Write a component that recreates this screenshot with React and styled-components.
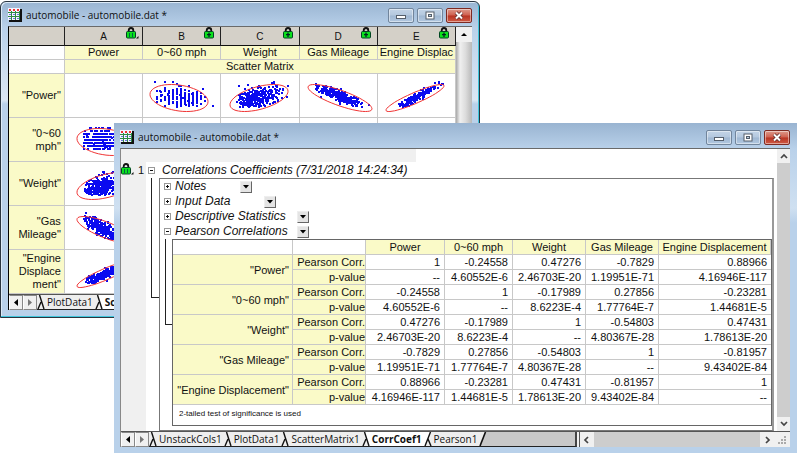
import React from "react";
import styled, { createGlobalStyle, css } from "styled-components";

const GlobalStyle = createGlobalStyle`
  * { box-sizing: border-box; }
  body { margin: 0; background: #fff; color: #111; font: 11px/15px "Liberation Sans", Arial, sans-serif; }
  button { margin: 0; padding: 0; font: inherit; color: inherit; }
`;

const Desktop = styled.main`
  position: relative;
  min-height: 100vh;
  overflow: hidden;
`;

/* ---------- window frame ---------- */

const Frame = styled.section`
  position: absolute;
  display: flex;
  flex-direction: column;
  ${(p) =>
    p.$front
      ? css`
          top: 123px;
          left: 114px;
          right: 3px;
          padding: 0 7px 6px 6px;
          background: linear-gradient(#99b4d1, #b9d1ea 26px, #cfe0f1 85px, #b9d1ea 100px);
        `
      : css`
          top: 1px;
          left: 0;
          width: 60%;
          padding: 0 7px 7px;
          border: 1px solid #2a3540;
          border-radius: 6px 6px 0 0;
          background: linear-gradient(#9ab5d2, #b9d1ea 26px, #dbe7f4 98px, #b9d1ea 102px);
          box-shadow: inset -1px -1px 0 #3fc6dc, inset 1px 1px 0 #dceaf7;
        `}
`;

const TitleBar = styled.header`
  display: flex;
  align-items: center;
  gap: 4px;
  height: ${(p) => (p.$front ? 25 : 24)}px;
  padding-top: ${(p) => (p.$front ? 3 : 2)}px;
`;

const Title = styled.h1`
  flex: 1;
  margin: 0;
  font: 400 10px/16px "Open Sans", sans-serif;
  white-space: nowrap;
`;

const CaptionButton = styled.button`
  display: grid;
  place-items: center;
  width: 26px;
  height: 15px;
  border: 1px solid ${(p) => (p.$close ? "#7d2a22" : "#71859c")};
  border-radius: 2px;
  box-shadow: inset 0 0 0 1px rgba(255, 255, 255, 0.45);
  background: ${(p) =>
    p.$close
      ? "linear-gradient(#dc9a8c, #d0604f 48%, #b83423 52%, #cf5a44)"
      : "linear-gradient(#c3d4e7, #b4c8de 48%, #9fb7d2 52%, #b2c8e0)"};
`;

const Client = styled.div`
  display: flex;
  flex-direction: column;
  background: #fff;
  border-top: 1px solid #6a6a6a;
  border-left: 1px solid ${(p) => (p.$front ? "#888" : "#000")};
`;

const Split = styled.div`
  display: flex;
  min-width: 0;
`;

function TableIcon() {
  return (
    <svg width="14" height="14" viewBox="0 0 14 14" shapeRendering="crispEdges">
      <rect x="1" y="1" width="13" height="13" fill="#111" />
      <rect x="0" y="0" width="12" height="12" fill="#f4f4ff" />
      <path d="M1 1.500h11" stroke="#e33" strokeWidth="2" strokeDasharray="2 2" />
      <path d="M0 4.500h12M0 8.500h12M3.500 3v9M7.500 3v9M11.500 3v9" stroke="#2e8a42" />
      <path d="M1 6.500h11M1 10.500h11" stroke="#6b78d8" strokeDasharray="2 2" />
    </svg>
  );
}

function CaptionGlyph({ kind }) {
  return (
    <svg width="12" height="9" viewBox="0 0 12 9">
      {kind === "min" && <rect x="1.5" y="4.5" width="9" height="3" fill="#fff" stroke="#555f6b" />}
      {kind === "max" && (
        <>
          <rect x="2" y="1" width="8" height="7" fill="#fff" stroke="#555f6b" />
          <rect x="4.5" y="3.5" width="3" height="2" fill="#b4c8de" stroke="#555f6b" />
        </>
      )}
      {kind === "close" && (
        <>
          <path d="M3 1.5l6 6M9 1.5l-6 6" stroke="#5c2b2b" strokeWidth="3.6" />
          <path d="M3 1.5l6 6M9 1.5l-6 6" stroke="#fff" strokeWidth="2" />
        </>
      )}
    </svg>
  );
}

const Buttons = styled.div`
  display: flex;
  gap: 3px;
`;

function WindowTitle({ front }) {
  return (
    <TitleBar $front={front}>
      <TableIcon />
      <Title>automobile - automobile.dat *</Title>
      <Buttons>
        <CaptionButton aria-label="Minimize"><CaptionGlyph kind="min" /></CaptionButton>
        <CaptionButton aria-label="Maximize"><CaptionGlyph kind="max" /></CaptionButton>
        <CaptionButton $close aria-label="Close"><CaptionGlyph kind="close" /></CaptionButton>
      </Buttons>
    </TitleBar>
  );
}

function Lock({ kind }) {
  return (
    <svg width="13" height="12" viewBox="0 0 13 12">
      <path d="M2.700 5V3.400Q2.700 1 5 1t2.300 2.400V5" fill="none" stroke="#111" strokeWidth="1.8" />
      <rect x=".5" y="4.500" width="9" height="6.500" rx="1" fill="#0be01c" stroke="#042" />
      {kind === "plus" ? (
        <path d="M5 5.500v4.500M3 7.700h4" stroke="#022" strokeWidth="1.300" />
      ) : (
        <>
          <path d="M3.500 6v4M6.500 6v4" stroke="#064" strokeWidth="1" />
          <path d="M12.500 9v2.500H10z" fill="#111" />
        </>
      )}
    </svg>
  );
}

/* ---------- scatter plots ---------- */

function random(seed) {
  let s = seed;
  return () => {
    s = (s * 1664525 + 1013904223) % 4294967296;
    return s / 4294967296;
  };
}

function cloud({ seed, r, cx = 37, mx = 0, my = 0, sx = 0.4, sy = 0.4, stepX, stepY, minX = 9, maxX = 71, n = 230 }) {
  const next = random(seed);
  let d = "";
  for (let i = 0; i < n; i++) {
    const radius = Math.sqrt(-2 * Math.log(next() + 1e-6));
    const angle = next() * Math.PI * 2;
    const a = radius * Math.cos(angle);
    const b = radius * Math.sin(angle);
    let x = cx + 30 * (mx + sx * a);
    let y = 23 - 14 * (my + sy * (r * a + Math.sqrt(1 - r * r) * b));
    if (stepX && next() < 0.9) x = Math.round(x / stepX) * stepX;
    if (stepY && next() < 0.9) y = Math.round(y / stepY) * stepY;
    if (x < minX || x > maxX || y < 6 || y > 32) continue;
    d += `M${Math.round(x)} ${Math.round(y)}h2v2h-2z`;
  }
  return d;
}

function ellipse({ e, cx = 37, rx = 29 }) {
  const k = Math.sqrt(1 - e * e);
  const points = Array.from({ length: 49 }, (_, i) => {
    const t = (i / 48) * Math.PI * 2;
    const x = cx + rx * Math.cos(t);
    const y = 24 - 13.5 * (e * Math.cos(t) + k * Math.sin(t));
    return `${x.toFixed(1)},${y.toFixed(1)}`;
  });
  return points.join(" ");
}

const PlotSvg = styled.svg`
  display: block;
  margin: 0 auto;
`;

function Plot({ spec }) {
  return (
    <PlotSvg width="76" height="43" viewBox="0 0 76 43">
      <path d={cloud(spec)} fill="#0a0af0" shapeRendering="crispEdges" />
      <polygon points={ellipse(spec)} fill="none" stroke="#f03434" />
    </PlotSvg>
  );
}

const powerRow = [
  null,
  { seed: 7, r: -0.25, e: -0.27, cx: 35, sx: 0.42, sy: 0.48, stepX: 4, n: 250 },
  { seed: 21, r: 0.4, e: 0.5, mx: -0.15, my: -0.02, sx: 0.42, sy: 0.4, minX: 14, n: 340 },
  { seed: 5, r: -0.88, e: -0.8, cx: 40, rx: 32, my: 0.08, sx: 0.4, sy: 0.42, minX: 14, n: 280 },
  { seed: 11, r: 0.93, e: 0.9, mx: 0.05, my: 0.08, sx: 0.36, sy: 0.42, minX: 19, n: 170 },
];

const firstColumn = [
  { label: "\"0~60 mph\"", spec: { seed: 3, r: -0.25, e: -0.25, cx: 41, mx: -0.2, sx: 0.35, sy: 0.5, stepY: 3, minX: 18, n: 300 } },
  { label: "\"Weight\"", spec: { seed: 9, r: 0.55, e: 0.47, cx: 41, mx: -0.2, my: -0.1, sx: 0.32, sy: 0.44, minX: 18, n: 360 } },
  { label: "\"Gas Mileage\"", spec: { seed: 15, r: -0.82, e: -0.78, cx: 41, mx: -0.1, my: 0.05, sx: 0.36, sy: 0.46, minX: 18, n: 290 } },
  { label: "\"Engine Displace ment\"", spec: { seed: 19, r: 0.9, e: 0.89, cx: 41, mx: -0.05, my: 0, sx: 0.38, minX: 18, n: 260 } },
];

/* ---------- worksheet of the back window ---------- */

const Sheet = styled.table`
  flex: 1;
  min-width: 0;
  table-layout: fixed;
  border-collapse: separate;
  border-spacing: 0;
  line-height: 13px;
`;

const ColumnHead = styled.th`
  height: 19px;
  padding: 0;
  font-weight: 400;
  font-size: 10px;
  background: #d4d0c8;
  border-right: 1px solid #222;
  border-bottom: 1px solid #111;
`;

const HeadGrid = styled.div`
  display: grid;
  grid-template-columns: 16px 1fr 16px;
  align-items: center;
  height: 18px;
  & > svg { align-self: start; }
`;

const SheetCell = styled.td`
  padding: 0;
  height: ${(p) => (p.$tall ? 44 : 13)}px;
  text-align: center;
  white-space: nowrap;
  overflow: hidden;
  background: ${(p) => (p.$label ? "#fafac8" : "#fff")};
  border-right: 1px solid #c8c8c8;
  border-bottom: 1px solid #c8c8c8;
`;

const RowName = styled.th`
  padding: 0 3px 0 8px;
  font-weight: 400;
  text-align: right;
  background: #fafac8;
  border-right: 1px solid #c8c8c8;
  border-bottom: 1px solid #c8c8c8;
`;

const RailTrack = styled.div`
  display: flex;
  flex-direction: column;
  width: ${(p) => (p.$front ? 13 : 16)}px;
  background: ${(p) => (p.$front ? "#cdcdcd" : "linear-gradient(90deg, #a8a8a8, #f0f0f0 25%, #dcdcdc 60%, #b8b8b8)")};
`;

const RailButton = styled.button`
  display: grid;
  place-items: center;
  height: ${(p) => (p.$tall ? 15 : 14)}px;
  width: ${(p) => (p.$wide ? "14px" : "100%")};
  border: 0;
  background: #f0f0f0;
`;

const Grow = styled.div`
  flex: 1;
`;

function Chevron({ d }) {
  return (
    <svg width="8" height="8" viewBox="0 0 8 8">
      <path d={d} fill="none" stroke="#444" strokeWidth="1.7" />
    </svg>
  );
}

/* ---------- sheet tabs ---------- */

const TabStrip = styled.nav`
  display: flex;
  height: 16px;
  overflow: hidden;
  background: #f0f0f0;
  border-top: 1px solid #555;
  font: 10px/14px "Open Sans", sans-serif;
`;

const TabArea = styled.div`
  display: flex;
  flex: ${(p) => (p.$front ? "0 0 64%" : "1")};
  background: #c8c8c8;
  border-bottom: 1px solid #222;
  border-right: 2px solid #444;
`;

const Tab = styled.button`
  flex: none;
  border: 0;
  padding: 0 2px;
  background: ${(p) => (p.$active ? "#fff" : "#eee")};
  font-weight: ${(p) => (p.$active ? 700 : 400)};
  white-space: nowrap;
`;

const Arrow = styled.button`
  display: grid;
  place-items: center;
  flex: none;
  width: 14px;
  border: 1px solid #888;
  border-left-color: #fff;
  background: #f0f0f0;
`;

const EdgeSvg = styled.svg`
  flex: none;
  background: #eee;
`;

function Edge({ kind = "next" }) {
  return (
    <EdgeSvg width="8" height="14" viewBox="0 0 8 14">
      {kind === "last" && <path d="M6 0h2v14H1z" fill="#c8c8c8" />}
      {kind === "active" && <path d="M3 0h5v14H7z" fill="#fff" />}
      {kind === "after" && <path d="M0 0h7L1 14H0z" fill="#fff" />}
      {(kind === "next" || kind === "active") && <path d="M2.5 0L7 14M1 14l3-7" fill="none" stroke="#111" strokeWidth="1.4" />}
      {kind === "after" && <path d="M6.500 0L1 14M4 7l3 7" fill="none" stroke="#111" strokeWidth="1.4" />}
      {kind === "last" && <path d="M6.500 0L1 14" fill="none" stroke="#111" strokeWidth="1.6" />}
    </EdgeSvg>
  );
}

function Triangle({ d, muted }) {
  return (
    <svg width="6" height="7" viewBox="0 0 6 7">
      <path d={d} fill={muted ? "#777" : "#000"} />
    </svg>
  );
}

function TabArrows() {
  return (
    <>
      <Arrow aria-label="Previous sheets"><Triangle d="M5 0v7L1 3.500z" /></Arrow>
      <Arrow aria-label="Next sheets"><Triangle muted d="M1 0v7L5 3.500z" /></Arrow>
    </>
  );
}

function BackWindow() {
  return (
    <Frame>
      <WindowTitle />
      <Client>
        <Split>
          <Sheet>
            <colgroup>
              <col width="12.5%" />
              <col width="17.5%" /><col width="17.5%" /><col width="17.5%" /><col width="17.5%" /><col width="17.5%" />
            </colgroup>
            <thead>
              <tr>
                <ColumnHead />
                {["A", "B", "C", "D", "E"].map((name, i) => (
                  <ColumnHead key={name}>
                    <HeadGrid><span /><span>{name}</span><Lock kind={i ? "plus" : "bars"} /></HeadGrid>
                  </ColumnHead>
                ))}
              </tr>
            </thead>
            <tbody>
              <tr>
                <SheetCell />
                {["Power", "0~60 mph", "Weight", "Gas Mileage", "Engine Displac"].map((name) => (
                  <SheetCell $label key={name}>{name}</SheetCell>
                ))}
              </tr>
              <tr>
                <SheetCell />
                <SheetCell $label colSpan={5}>Scatter Matrix</SheetCell>
              </tr>
              <tr>
                <RowName>"Power"</RowName>
                {powerRow.map((spec, i) => (
                  <SheetCell $tall key={i}>{spec && <Plot spec={spec} />}</SheetCell>
                ))}
              </tr>
              {firstColumn.map((row) => (
                <tr key={row.label}>
                  <RowName>{row.label}</RowName>
                  <SheetCell $tall><Plot spec={row.spec} /></SheetCell>
                  <SheetCell $tall /><SheetCell $tall /><SheetCell $tall /><SheetCell $tall />
                </tr>
              ))}
            </tbody>
          </Sheet>
          <RailTrack>
            <RailButton $tall aria-label="Scroll up"><Triangle d="M0 5l3-3 3 3z" /></RailButton>
            <Grow />
          </RailTrack>
        </Split>
        <TabStrip>
          <TabArrows />
          <TabArea>
            <Edge />
            <Tab>PlotData1</Tab>
            <Edge kind="active" />
            <Tab $active>ScatterMatrix1</Tab>
          </TabArea>
        </TabStrip>
      </Client>
    </Frame>
  );
}

/* ---------- report of the front window ---------- */

const Gutter = styled.div`
  width: 25px;
  padding: 14px 0 0;
  background: #f0f0f0;
  display: flex;
  gap: 4px;
  align-items: flex-start;
`;

const Report = styled.div`
  flex: 1;
  min-width: 0;
  padding-right: 3px;
`;

const TopBand = styled.div`
  width: 43%;
  height: 13px;
  background: #f0f0f0;
`;

const Branch = styled.div`
  display: flex;
  align-items: center;
  gap: ${(p) => (p.$root ? 7 : 4)}px;
  height: ${(p) => (p.$root ? 16 : 15)}px;
  padding-left: 2px;
  font: italic 12px/15px "Liberation Sans", Arial, sans-serif;
  white-space: nowrap;
`;

const BranchName = styled.span`
  min-width: ${(p) => p.$min || 0}px;
`;

const Toggle = styled.button`
  display: grid;
  place-items: center;
  width: 7px;
  height: 7px;
  border: 0;
  background: none;
`;

const Drop = styled.button`
  display: grid;
  place-items: center;
  width: 12px;
  height: 12px;
  border: 1px solid #eee;
  border-right-color: #666;
  border-bottom-color: #666;
  background: #e4e4e4;
`;

const Nest = styled.div`
  display: grid;
  grid-template-columns: ${(p) => p.$rail}px 1fr;
`;

const Rail = styled.div`
  height: ${(p) => p.$length}px;
  margin-left: ${(p) => p.$inset}px;
  border-left: 1px solid #222;
  border-bottom: 1px solid #222;
`;

const ReportBox = styled.div`
  border: 1px solid #777;
  border-right: 2px solid #999;
  padding: 0 0 4px 2px;
`;

const ResultBox = styled.div`
  border: 1px solid #666;
`;

const Results = styled.table`
  width: 100%;
  table-layout: fixed;
  border-collapse: separate;
  border-spacing: 0;
  line-height: 14px;
  white-space: nowrap;
`;

const Value = styled.td`
  height: 15px;
  padding: 0 4px 0 0;
  text-align: right;
  border-right: 1px solid #c8c8c8;
  border-bottom: 1px solid #c8c8c8;
  &:last-child { border-right: 0; }
`;

const Heading = styled.th`
  height: 15px;
  padding: 0 ${(p) => p.$pad || 0}px 0 0;
  font-weight: 400;
  text-align: ${(p) => (p.$right ? "right" : "center")};
  background: ${(p) => (p.$blank ? "#fff" : "#fafac8")};
  border-right: 1px solid #c8c8c8;
  border-bottom: 1px solid #c8c8c8;
`;

const Footnote = styled.p`
  margin: 0;
  padding: 3px 6px 5px;
  font-size: 8px;
  line-height: 12px;
`;

const HTrack = styled.div`
  display: flex;
  flex: 1;
  margin-left: 2px;
  border-left: 1px solid #555;
  background: #cdcdcd;
`;

const Grip = styled.div`
  display: grid;
  place-items: center;
  width: 16px;
  background: #f0f0f0;
`;

function ToggleButton({ open, label }) {
  return (
    <Toggle aria-label={label} aria-expanded={!!open}>
      <svg width="7" height="7" viewBox="0 0 7 7" shapeRendering="crispEdges">
        <rect x=".5" y=".5" width="6" height="6" fill="#fff" stroke="#999" />
        <path d={open ? "M2 3.500h3" : "M2 3.500h3M3.500 2v3"} stroke="#111" />
      </svg>
    </Toggle>
  );
}

const branches = [
  { name: "Notes", min: 61 },
  { name: "Input Data", min: 85 },
  { name: "Descriptive Statistics", min: 118 },
  { name: "Pearson Correlations", min: 118, open: true },
];

const variables = ["Power", "0~60 mph", "Weight", "Gas Mileage", "Engine Displacement"];

const results = [
  [["1", "-0.24558", "0.47276", "-0.7829", "0.88966"], ["--", "4.60552E-6", "2.46703E-20", "1.19951E-71", "4.16946E-117"]],
  [["-0.24558", "1", "-0.17989", "0.27856", "-0.23281"], ["4.60552E-6", "--", "8.6223E-4", "1.77764E-7", "1.44681E-5"]],
  [["0.47276", "-0.17989", "1", "-0.54803", "0.47431"], ["2.46703E-20", "8.6223E-4", "--", "4.80367E-28", "1.78613E-20"]],
  [["-0.7829", "0.27856", "-0.54803", "1", "-0.81957"], ["1.19951E-71", "1.77764E-7", "4.80367E-28", "--", "9.43402E-84"]],
  [["0.88966", "-0.23281", "0.47431", "-0.81957", "1"], ["4.16946E-117", "1.44681E-5", "1.78613E-20", "9.43402E-84", "--"]],
];

function ResultTable() {
  return (
    <Results>
      <colgroup>
        <col width="120" /><col width="73" /><col width="79" /><col width="68" />
        <col width="73" /><col width="73" /><col />
      </colgroup>
      <thead>
        <tr>
          <Heading $blank /><Heading $blank />
          {variables.map((name) => <Heading key={name} scope="col">{name}</Heading>)}
        </tr>
      </thead>
      <tbody>
        {results.map(([corr, p], i) => (
          <React.Fragment key={variables[i]}>
            <tr>
              <Heading $right $pad={3} rowSpan={2} scope="rowgroup">"{variables[i]}"</Heading>
              <Heading $right scope="row">Pearson Corr.</Heading>
              {corr.map((v, j) => <Value key={j}>{v}</Value>)}
            </tr>
            <tr>
              <Heading $right scope="row">p-value</Heading>
              {p.map((v, j) => <Value key={j}>{v}</Value>)}
            </tr>
          </React.Fragment>
        ))}
      </tbody>
    </Results>
  );
}

function FrontWindow() {
  return (
    <Frame $front>
      <WindowTitle front />
      <Client $front>
        <Split>
          <Gutter><Lock kind="bars" /><span>1</span></Gutter>
          <Report>
            <TopBand />
            <Branch $root>
              <ToggleButton open label="Correlations Coefficients" />
              <BranchName>Correlations Coefficients (7/31/2018 14:24:34)</BranchName>
            </Branch>
            <Nest $rail={13}>
              <Rail $length={120} $inset={5} />
              <ReportBox>
                {branches.map((b) => (
                  <Branch key={b.name}>
                    <ToggleButton open={b.open} label={b.name} />
                    <BranchName $min={b.min}>{b.name}</BranchName>
                    <Drop aria-label={`${b.name} menu`}>
                      <svg width="6" height="4" viewBox="0 0 6 4"><path d="M0 0h6L3 3.500z" /></svg>
                    </Drop>
                  </Branch>
                ))}
                <Nest $rail={10}>
                  <Rail $length={86} $inset={3} />
                  <ResultBox>
                    <ResultTable />
                    <Footnote>2-tailed test of significance is used</Footnote>
                  </ResultBox>
                </Nest>
              </ReportBox>
            </Nest>
          </Report>
          <RailTrack $front>
            <RailButton aria-label="Scroll up"><Chevron d="M1 6l3-3 3 3" /></RailButton>
            <Grow />
            <RailButton aria-label="Scroll down"><Chevron d="M1 2l3 3 3-3" /></RailButton>
          </RailTrack>
        </Split>
        <TabStrip>
          <TabArrows />
          <TabArea $front>
            <Edge /><Tab>UnstackCols1</Tab>
            <Edge /><Tab>PlotData1</Tab>
            <Edge /><Tab>ScatterMatrix1</Tab>
            <Edge kind="active" /><Tab $active>CorrCoef1</Tab>
            <Edge kind="after" /><Tab>Pearson1</Tab>
            <Edge kind="last" />
          </TabArea>
          <HTrack>
            <RailButton $wide $tall aria-label="Scroll left"><Chevron d="M5 1L2 4l3 3" /></RailButton>
            <Grow />
            <RailButton $wide $tall aria-label="Scroll right"><Chevron d="M3 1l3 3-3 3" /></RailButton>
          </HTrack>
          <Grip>
            <svg width="8" height="8" viewBox="0 0 8 8" fill="#aaa">
              <path d="M6 0h2v2H6zM3 3h2v2H3zM6 3h2v2H6zM0 6h2v2H0zM3 6h2v2H3zM6 6h2v2H6z" />
            </svg>
          </Grip>
        </TabStrip>
      </Client>
    </Frame>
  );
}

export default function App() {
  return (
    <Desktop>
      <GlobalStyle />
      <BackWindow />
      <FrontWindow />
    </Desktop>
  );
}
